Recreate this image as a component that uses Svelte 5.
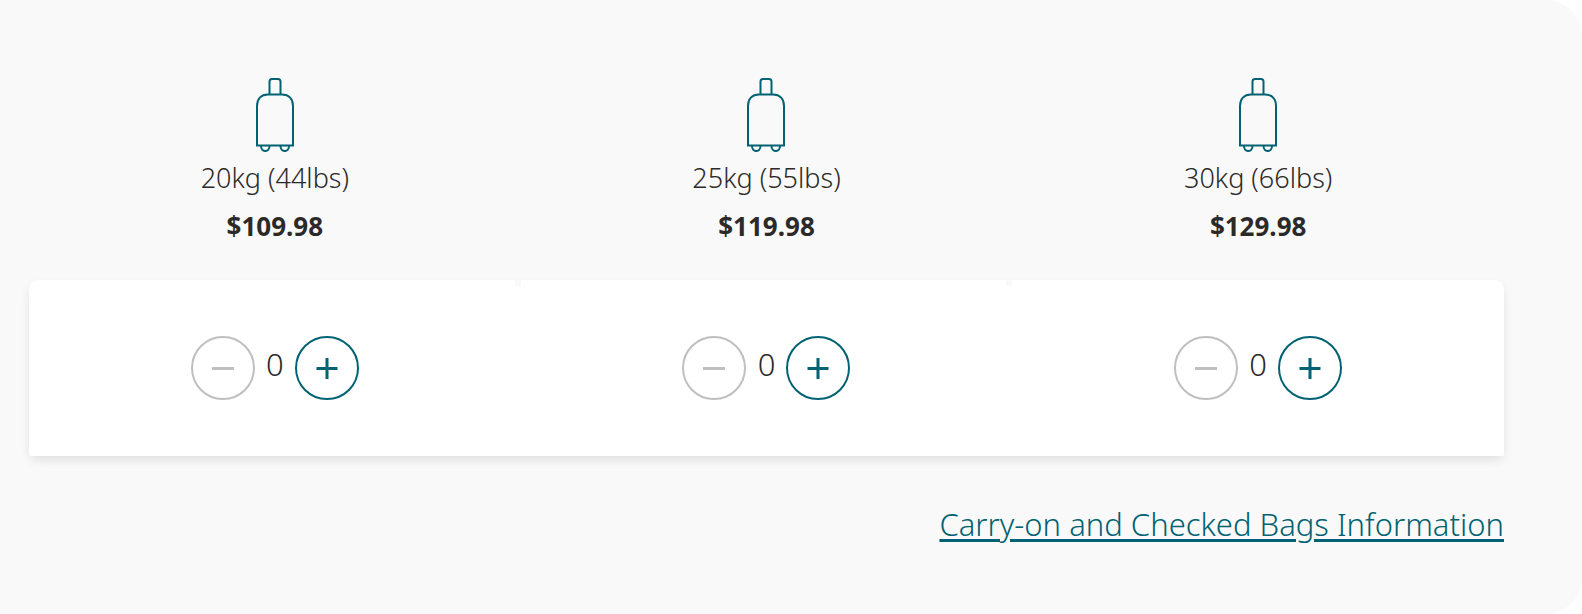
<script>
    let bags = $state([
        { weight: '20kg (44lbs)', price: '$109.98', count: 0 },
        { weight: '25kg (55lbs)', price: '$119.98', count: 0 },
        { weight: '30kg (66lbs)', price: '$129.98', count: 0 }
    ])
</script>

<section class="panel">
    <div class="options">
        {#each bags as bag}
            <div class="option">
                <svg class="suitcase" viewBox="0 0 38 74" width="38" height="74" aria-hidden="true">
                    <path d="M13.5 16V3.5Q13.5 1 16 1H22Q24.5 1 24.5 3.5V16" />
                    <path d="M1 67.5V28C1 21 5 16.5 12 16.5H26C33 16.5 37 21 37 28V67.5Z" />
                    <path d="M5 68C5 74.7 13.5 74.7 13.5 68M24.5 68C24.5 74.7 33 74.7 33 68" />
                </svg>
                <p class="weight">{bag.weight}</p>
                <p class="price">{bag.price}</p>
            </div>
        {/each}
    </div>

    <div class="card">
        {#each bags as bag}
            <div class="cell">
                <button
                    aria-label="Remove one {bag.weight} bag"
                    disabled={bag.count === 0}
                    onclick={() => bag.count--}
                >
                    <svg viewBox="0 0 22 22" width="22" height="22"><path d="M0 11.5H22" /></svg>
                </button>
                <span class="count">{bag.count}</span>
                <button aria-label="Add one {bag.weight} bag" onclick={() => bag.count++}>
                    <svg viewBox="0 0 22 22" width="22" height="22"><path d="M0.5 11.5H21.5M11 1V22" /></svg>
                </button>
            </div>
        {/each}
    </div>

    <div class="info">
        <a href="#bags-information">Carry-on and Checked Bags Information</a>
    </div>
</section>

<style>
    :global(body) {
        background: #fff;
    }

    .panel {
        box-sizing: border-box;
        min-height: 100vh;
        padding: 78px 78px 66px 29px;
        background: #f9f9f9;
        border-radius: 0 36px 36px 0;
        color: #2c2a29;
        font-family: "Noto Sans", "Open Sans", sans-serif;
        font-weight: 300;
    }

    .options,
    .card {
        display: grid;
        grid-template-columns: repeat(3, 1fr);
    }

    .option {
        display: flex;
        flex-direction: column;
        align-items: center;
        padding-bottom: 30px;
    }

    svg {
        display: block;
        fill: none;
        stroke: currentColor;
    }

    .suitcase {
        color: #006272;
        stroke-width: 2;
        margin-bottom: 2px;
    }

    p {
        margin: 0;
        line-height: 48px;
    }

    .weight {
        font-size: 27px;
    }

    .price {
        font-size: 26px;
        font-weight: 700;
    }

    .card {
        background: #fff;
        border-radius: 9px 9px 2px 2px;
        box-shadow: 0 5px 12px -2px rgba(0, 0, 0, 0.12);
    }

    .cell {
        position: relative;
        display: flex;
        justify-content: center;
        align-items: center;
        padding: 56px 0;
    }

    /* small notch where two cells meet */
    .cell + .cell::before {
        content: "";
        position: absolute;
        top: 0;
        left: -6px;
        width: 6px;
        height: 6px;
        background: #f9f9f9;
    }

    button {
        display: flex;
        justify-content: center;
        align-items: center;
        width: 64px;
        height: 64px;
        padding: 0;
        border: 2px solid #006272;
        border-radius: 50%;
        background: none;
        color: #006272;
        stroke-width: 3;
        cursor: pointer;
    }

    button:disabled {
        border-color: #bfbfbf;
        color: #bfbfbf;
        cursor: default;
    }

    .count {
        width: 40px;
        padding-bottom: 8px;
        font-size: 31px;
        line-height: 40px;
        text-align: center;
    }

    .info {
        margin-top: 44px;
        text-align: right;
    }

    a {
        color: #006272;
        font-size: 31px;
        line-height: 48px;
        text-decoration-thickness: 3px;
        text-underline-offset: 3px;
    }
</style>
